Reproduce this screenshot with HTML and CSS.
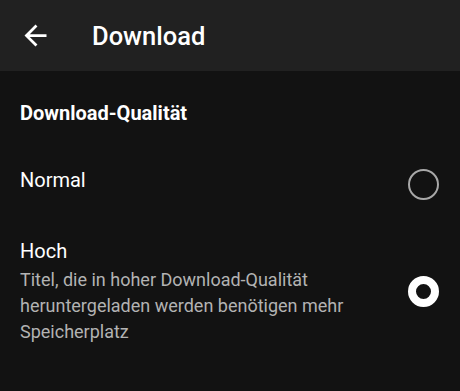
FILE: index.html
```html
<!DOCTYPE html>
<html lang="de">
<head>
<meta charset="utf-8">
<title>Download</title>
<link rel="stylesheet" href="styles.css">
</head>
<body>
<div class="app">
  <header class="topbar">
    <svg class="back" viewBox="0 0 24 24" width="33" height="33" aria-hidden="true"><path d="M20 11H7.83l5.59-5.59L12 4l-8 8 8 8 1.41-1.41L7.83 13H20v-2z" fill="#ffffff"/></svg>
    <h1 class="title">Download</h1>
  </header>
  <main class="content">
    <h2 class="section">Download-Qualität</h2>
    <div class="option single">
      <div class="option-text">
        <div class="option-title">Normal</div>
      </div>
      <span class="radio"></span>
    </div>
    <div class="option">
      <div class="option-text">
        <div class="option-title">Hoch</div>
        <div class="option-desc">Titel, die in hoher Download-Qualität heruntergeladen werden benötigen mehr Speicherplatz</div>
      </div>
      <span class="radio checked"></span>
    </div>
  </main>
</div>
</body>
</html>
```

FILE: styles.css
```css
html, body {
  margin: 0;
  padding: 0;
  background: #121212;
}
body {
  font-family: Roboto, "Noto Sans", sans-serif;
  color: #ffffff;
  width: 460px;
  height: 391px;
  overflow: hidden;
}
.topbar {
  height: 71px;
  background: #212121;
  display: flex;
  align-items: center;
  padding-left: 19px;
  box-sizing: border-box;
}
.back {
  display: block;
  flex: none;
}
.title {
  margin: 0 0 0 40px;
  font-size: 25.5px;
  font-weight: 500;
  line-height: 30px;
}
.content {
  display: flex;
  flex-direction: column;
}
.section {
  margin: 29px 20px 23px;
  font-size: 20px;
  font-weight: 700;
  line-height: 26px;
}
.option {
  display: flex;
  align-items: center;
  padding: 18px 20px;
}
.option + .option {
  margin-top: 1px;
}
.option.single .option-text {
  padding-bottom: 8px;
}
.option-text {
  flex: 1;
}
.option-title {
  font-size: 20px;
  line-height: 26px;
}
.option-desc {
  margin-top: 3px;
  font-size: 18px;
  line-height: 26px;
  color: #b3b3b3;
  max-width: 350px;
}
.radio {
  flex: none;
  width: 31px;
  height: 31px;
  box-sizing: border-box;
  border-radius: 50%;
  border: 2px solid #a8a8a8;
  margin-right: 1px;
}
.radio.checked {
  border: 8.5px solid #ffffff;
  background: #121212;
}
```
